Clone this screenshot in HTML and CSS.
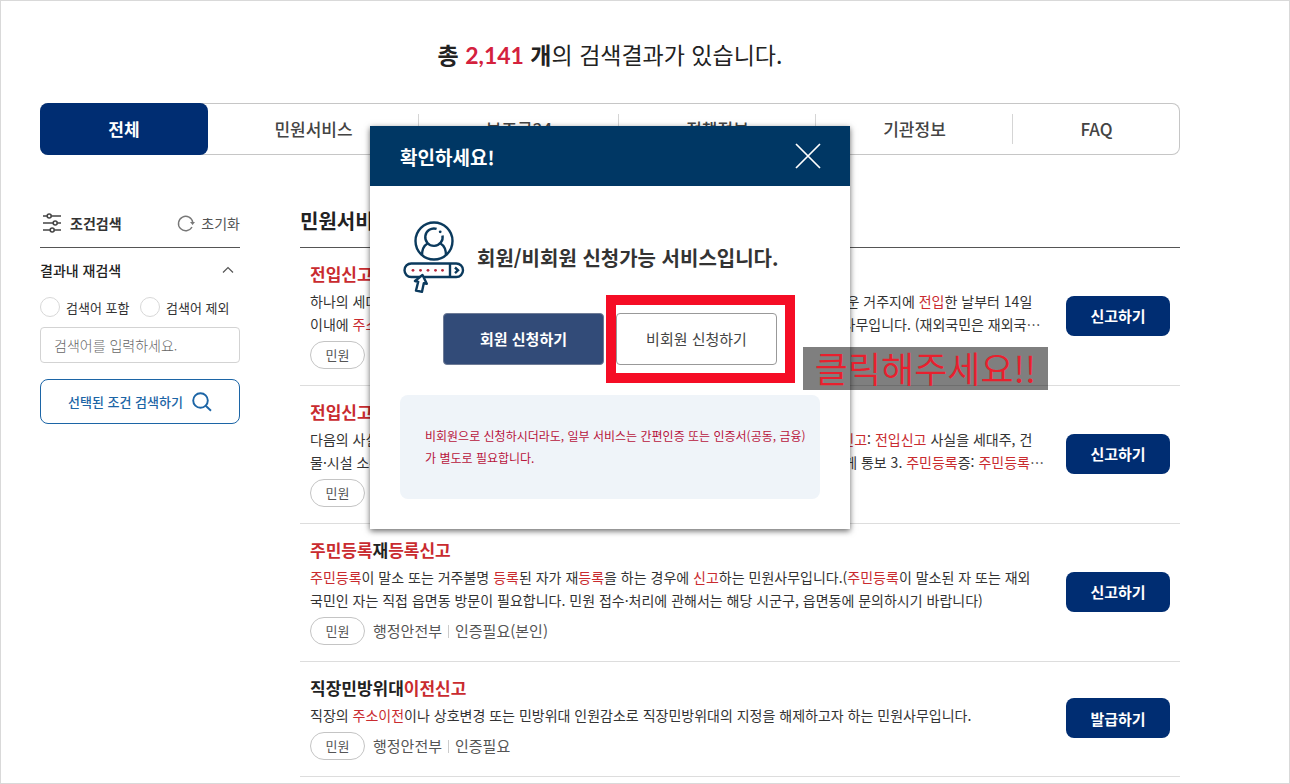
FILE: index.html
```html
<!DOCTYPE html>
<html lang="ko">
<head>
  <meta charset="UTF-8" />
  <meta name="viewport" content="width=device-width, initial-scale=1" />
  <title>검색결과</title>
  <link rel="stylesheet" href="styles.css">
</head>
<body>
  <div class="page">
    <h1 class="total"><strong>총 <em>2,141</em> 개</strong>의 검색결과가 있습니다.</h1>

    <nav class="tabs">
      <button class="tab active" type="button">전체</button>
      <button class="tab" type="button">민원서비스</button>
      <button class="tab" type="button">보조금24</button>
      <button class="tab" type="button">정책정보</button>
      <button class="tab" type="button">기관정보</button>
      <button class="tab" type="button">FAQ</button>
    </nav>

    <div class="content">
      <aside class="filter">
        <div class="filter-head">
          <svg class="filter-icon" viewBox="0 0 20 20" width="20" height="20" fill="none" stroke="#444" stroke-width="1.6">
            <path d="M1 3h4M9.500 3H19M1 10h10M15.500 10H19M1 17h7M12.500 17H19" />
            <circle cx="7.200" cy="3" r="2" /><circle cx="13.200" cy="10" r="2" /><circle cx="10.200" cy="17" r="2" />
          </svg>
          <h2>조건검색</h2>
          <button class="reset" type="button">
            <svg viewBox="0 0 18 18" width="18" height="18" fill="none" stroke="#777" stroke-width="1.4">
              <path d="M15 13A7.200 7.200 0 1 1 15.800 8.500" />
              <path d="M13 8h5l-2.400 3z" fill="#777" stroke="none" />
            </svg>
            초기화
          </button>
        </div>
        <button class="filter-toggle" type="button">
          결과내 재검색
          <svg viewBox="0 0 12 8" width="12" height="8" fill="none" stroke="#555" stroke-width="1.2"><path d="M1 6.500L6 1.500l5 5" /></svg>
        </button>
        <div class="radios">
          <label><input type="radio" name="mode" /> 검색어 포함</label>
          <label><input type="radio" name="mode" /> 검색어 제외</label>
        </div>
        <input class="keyword" type="text" aria-label="검색어" placeholder="검색어를 입력하세요." />
        <button class="filter-submit" type="button">
          선택된 조건 검색하기
          <svg viewBox="0 0 20 20" width="20" height="20" fill="none" stroke="#1c65a6" stroke-width="1.9"><circle cx="8.500" cy="8.500" r="7.300" /><path d="M13.700 13.700l5.300 5" /></svg>
        </button>
      </aside>

      <main class="results">
        <h2 class="results-title">민원서비스</h2>

        <article class="item">
          <div class="item-text">
            <h3><mark>전입신고</mark></h3>
            <p>하나의 세대에 속하는 자의 전원 또는 일부가 거주지를 각각 이동할 때에는 신고의무자가 새로운 거주지에 <mark>전입</mark>한 날부터 14일<br>이내에 <mark>주소</mark>지 변경 및 등록을 위한 전입신고를 제출하고 관할 읍면동사무소에 신고하는 민원사무입니다. (재외국민은 재외국⋯</p>
            <div class="meta"><span class="badge">민원</span></div>
          </div>
          <button class="action" type="button">신고하기</button>
        </article>

        <article class="item">
          <div class="item-text">
            <h3><mark>전입신고</mark></h3>
            <p>다음의 사실을 각 신청인에게 통보받고자 신청하는 민원사무입니다. 1. 전입사실 통보서비스 <mark>신고</mark>: <mark>전입신고</mark> 사실을 세대주, 건<br>물·시설 소유자 또는 임대인에게 통보 2. 세대주 변경 신고: 변경 사실을 해당 종전의 세대주에게 통보 3. <mark>주민등록</mark>증: <mark>주민등록</mark>⋯</p>
            <div class="meta"><span class="badge">민원</span></div>
          </div>
          <button class="action" type="button">신고하기</button>
        </article>

        <article class="item">
          <div class="item-text">
            <h3><mark>주민등록</mark>재<mark>등록신고</mark></h3>
            <p><mark>주민등록</mark>이 말소 또는 거주불명 <mark>등록</mark>된 자가 재<mark>등록</mark>을 하는 경우에 <mark>신고</mark>하는 민원사무입니다.(<mark>주민등록</mark>이 말소된 자 또는 재외<br>국민인 자는 직접 읍면동 방문이 필요합니다. 민원 접수·처리에 관해서는 해당 시군구, 읍면동에 문의하시기 바랍니다)</p>
            <div class="meta"><span class="badge">민원</span><span>행정안전부</span><span class="cert">인증필요(본인)</span></div>
          </div>
          <button class="action" type="button">신고하기</button>
        </article>

        <article class="item">
          <div class="item-text">
            <h3>직장민방위대<mark>이전신고</mark></h3>
            <p>직장의 <mark>주소이전</mark>이나 상호변경 또는 민방위대 인원감소로 직장민방위대의 지정을 해제하고자 하는 민원사무입니다.</p>
            <div class="meta"><span class="badge">민원</span><span>행정안전부</span><span class="cert">인증필요</span></div>
          </div>
          <button class="action" type="button">발급하기</button>
        </article>
      </main>
    </div>

    <!-- 신청 방법 선택 팝업 -->
    <div class="modal" role="dialog" aria-labelledby="modalTitle">
      <div class="modal-head">
        <h2 id="modalTitle">확인하세요!</h2>
        <button class="close" type="button" aria-label="닫기">
          <svg viewBox="0 0 26 26" width="26" height="26" stroke="#fff" stroke-width="1.7"><path d="M1 1l24 24M25 1L1 25" /></svg>
        </button>
      </div>
      <div class="modal-body">
        <div class="guide">
          <svg viewBox="0 0 62 72" width="62" height="72" fill="none" stroke="#0b3a5d" stroke-width="2.4">
            <circle cx="31" cy="20" r="18.500" />
            <path d="M19 34.500c0-6 2-10 5.500-12M43 34.500c0-6-2-10-5.500-12" />
            <path d="M33.600 7.900A8.700 8.700 0 1 0 39.500 14.500" />
            <circle cx="37.200" cy="10.800" r="1.400" fill="#0b3a5d" stroke="none" />
            <rect x="1.500" y="42.500" width="58.500" height="13.500" rx="6.700" />
            <path d="M47 42.500V56M52 46.500l3 2.800-3 2.800" />
            <g fill="#b5283c" stroke="none">
              <circle cx="10" cy="49.300" r="1.400" /><circle cx="17.500" cy="49.300" r="1.400" /><circle cx="25" cy="49.300" r="1.400" /><circle cx="32.500" cy="49.300" r="1.400" /><circle cx="39.500" cy="49.300" r="1.400" />
            </g>
            <path d="M19.500 54l-7.500 6 3.200.8-2.200 8.700 6 1.300 1.800-8.600 3 .6z" fill="#fff" stroke-width="2.400" stroke-linejoin="round" />
          </svg>
          <p>회원/비회원 신청가능 서비스입니다.</p>
        </div>
        <div class="choices">
          <button class="member" type="button">회원 신청하기</button>
          <div class="focus">
            <button class="guest" type="button">비회원 신청하기</button>
          </div>
        </div>
        <p class="notice">비회원으로 신청하시더라도, 일부 서비스는 간편인증 또는 인증서(공동, 금융)<br>가 별도로 필요합니다.</p>
      </div>
      <div class="callout">클릭해주세요!!</div>
    </div>
  </div>
</body>
</html>
```

FILE: styles.css
```css
* {
  box-sizing: border-box;
}
body {
  margin: 0;
  font-family: "Noto Sans CJK KR", sans-serif;
  font-size: 14px;
  color: #333;
  background: #fff;
}
h1, h2, h3, p {
  margin: 0;
}
button, input {
  font-family: inherit;
  margin: 0;
}
button {
  padding: 0;
  border: 0;
  background: none;
  cursor: pointer;
}
mark {
  color: #c92b2f;
  background: none;
}
.page {
  position: relative;
  min-height: 100vh;
  padding: 34px 109px 5px 39px;
  border: 1px solid #d9d9d9;
}
.total {
  font-size: 23px;
  font-weight: 400;
  line-height: 38px;
  text-align: center;
  color: #222;
}
.total em {
  font-family: Lato, sans-serif;
  font-style: normal;
  color: #d4213d;
}

/* tabs */
.tabs {
  display: grid;
  grid-template-columns: 168fr 211fr 200fr 197fr 197fr 167fr;
  height: 52px;
  margin-top: 29px;
  border-radius: 8px;
  box-shadow: inset 0 0 0 1px #c6c6c6;
}
.tab {
  display: flex;
  align-items: center;
  justify-content: center;
  padding-bottom: 2px;
  font-size: 17px;
  font-weight: 500;
  color: #444;
}
.tab.active {
  border-radius: 8px;
  background: #002d72;
  color: #fff;
  font-weight: 700;
}
.tab:not(.active):not(:last-child) {
  background: linear-gradient(#d5d5d5, #d5d5d5) right center / 1px 30px no-repeat;
}

.content {
  display: flex;
  gap: 60px;
  margin-top: 43px;
}

/* filter */
.filter {
  flex: 0 0 200px;
}
.filter-head {
  display: flex;
  align-items: center;
  height: 50px;
  border-bottom: 1px solid #555;
}
.filter-icon {
  margin: 0 8px 0 2px;
}
.filter-head h2 {
  font-size: 14px;
  font-weight: 700;
}
.reset {
  display: flex;
  align-items: center;
  gap: 6px;
  margin-left: auto;
  font-size: 14px;
  color: #555;
}
.filter-toggle {
  display: flex;
  align-items: center;
  justify-content: space-between;
  width: 100%;
  height: 44px;
  padding-right: 6px;
  font-size: 14px;
  font-weight: 500;
  color: #222;
}
.radios {
  display: flex;
  margin-top: 4px;
}
.radios label {
  display: flex;
  align-items: center;
  gap: 6px;
  flex: 1;
  height: 22px;
  font-size: 13px;
  white-space: nowrap;
}
.radios input {
  appearance: none;
  flex: none;
  width: 20px;
  height: 20px;
  margin: 0;
  border: 1px solid #d8d8d8;
  border-radius: 50%;
}
.keyword {
  display: block;
  width: 100%;
  height: 36px;
  margin-top: 9px;
  padding: 0 13px;
  border: 1px solid #d3d3d3;
  border-radius: 4px;
  font-size: 14px;
}
.keyword::placeholder {
  color: #666;
  font-weight: 300;
}
.filter-submit {
  display: flex;
  align-items: center;
  justify-content: center;
  gap: 9px;
  width: 100%;
  height: 45px;
  margin-top: 16px;
  border: 1px solid #1c65a6;
  border-radius: 8px;
  font-size: 13px;
  font-weight: 500;
  color: #1c65a6;
}

/* results */
.results {
  flex: 1;
  min-width: 0;
}
.results-title {
  height: 50px;
  border-bottom: 1px solid #555;
  font-size: 20px;
  font-weight: 700;
  line-height: 45px;
  color: #222;
}
.item {
  display: flex;
  align-items: center;
  padding: 14px 10px 16px;
  border-bottom: 1px solid #ddd;
}
.item-text {
  flex: 1;
  min-width: 0;
}
.item h3 {
  font-size: 17px;
  font-weight: 700;
  line-height: 24px;
  color: #222;
}
.item p {
  margin: 4px 0 5px;
  line-height: 23px;
}
.meta {
  display: flex;
  align-items: center;
  font-size: 15px;
  line-height: 28px;
  color: #555;
}
.badge {
  width: 55px;
  height: 28px;
  margin-right: 8px;
  border: 1px solid #c4c4c4;
  border-radius: 14px;
  font-size: 13px;
  line-height: 26px;
  text-align: center;
}
.cert::before {
  content: "";
  display: inline-block;
  height: 13px;
  margin: 0 6px;
  border-left: 1px solid #ccc;
  vertical-align: -1px;
}
.action {
  flex: none;
  width: 104px;
  height: 40px;
  margin-left: 16px;
  border-radius: 8px;
  background: #002d72;
  color: #fff;
  font-size: 15px;
  font-weight: 700;
}

/* modal */
.modal {
  position: absolute;
  top: 125px;
  left: 39px;
  right: 109px;
  width: 480px;
  margin: 0 auto;
  background: #fff;
  box-shadow: 0 2px 6px rgba(0, 0, 0, 0.6);
}
.modal-head {
  display: flex;
  align-items: center;
  justify-content: space-between;
  height: 60px;
  padding: 0 29px 0 30px;
  background: #003764;
  color: #fff;
}
.modal-head h2 {
  font-size: 19px;
  font-weight: 700;
}
.close {
  display: flex;
}
.modal-body {
  padding: 35px 30px 30px;
}
.guide {
  display: flex;
  align-items: center;
  gap: 12px;
  padding-left: 3px;
}
.guide p {
  font-size: 20px;
  font-weight: 700;
}
.choices {
  display: flex;
  gap: 12px;
  margin: 20px 43px 0;
}
.choices button {
  width: 161px;
  height: 52px;
  padding-bottom: 2px;
  border-radius: 4px;
  font-size: 15px;
}
.member {
  border: 1px solid #6e7b96;
  background: #324b78;
  color: #fff;
  font-weight: 700;
}
.guest {
  border: 1px solid #999;
  background: #fff;
  color: #444;
}
.focus {
  position: relative;
}
.focus::after {
  content: "";
  position: absolute;
  inset: -18px -18px -18px -10px;
  border: 10px solid #f50d25;
  pointer-events: none;
}
.notice {
  min-height: 104px;
  margin-top: 30px;
  padding: 30px 10px 0 25px;
  border-radius: 8px;
  background: #eff4f9;
  color: #b8143c;
  font-size: 12px;
  line-height: 22px;
}
.callout {
  position: absolute;
  top: 221px;
  left: 433px;
  width: 245px;
  height: 43px;
  background: rgba(0, 0, 0, 0.5);
  color: #e8202e;
  font-size: 36px;
  font-weight: 350;
  line-height: 41px;
  text-align: center;
  white-space: nowrap;
}
```
